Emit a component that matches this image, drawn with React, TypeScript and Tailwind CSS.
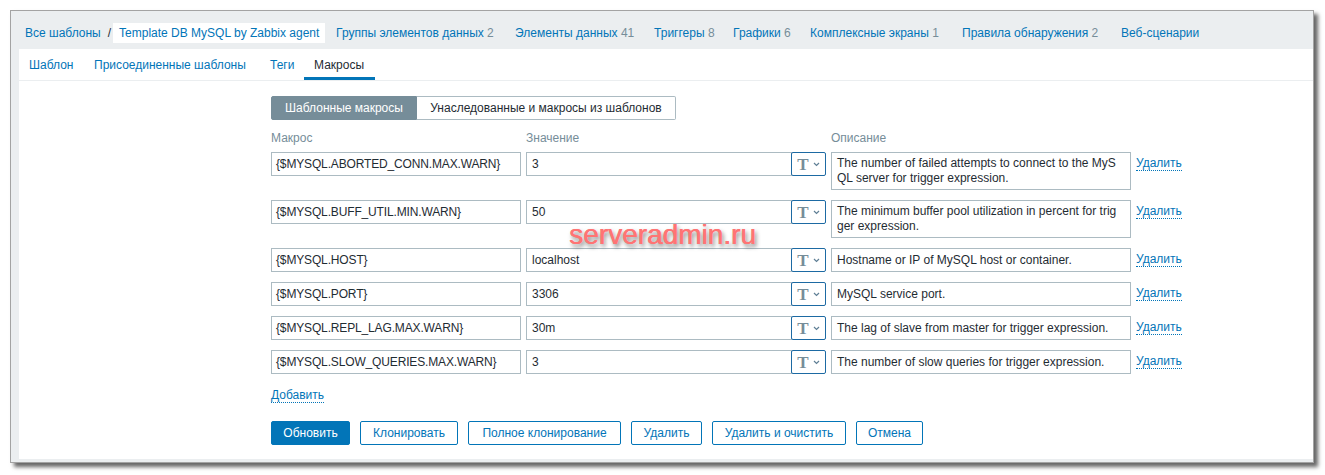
import React from "react";

const rows: { macro: string; value: string; desc: string[] }[] = [
  {
    macro: "{$MYSQL.ABORTED_CONN.MAX.WARN}",
    value: "3",
    desc: ["The number of failed attempts to connect to the MyS", "QL server for trigger expression."],
  },
  {
    macro: "{$MYSQL.BUFF_UTIL.MIN.WARN}",
    value: "50",
    desc: ["The minimum buffer pool utilization in percent for trig", "ger expression."],
  },
  { macro: "{$MYSQL.HOST}", value: "localhost", desc: ["Hostname or IP of MySQL host or container."] },
  { macro: "{$MYSQL.PORT}", value: "3306", desc: ["MySQL service port."] },
  { macro: "{$MYSQL.REPL_LAG.MAX.WARN}", value: "30m", desc: ["The lag of slave from master for trigger expression."] },
  { macro: "{$MYSQL.SLOW_QUERIES.MAX.WARN}", value: "3", desc: ["The number of slow queries for trigger expression."] },
];

const nav: { label: string; count?: string; w: string }[] = [
  { label: "Группы элементов данных", count: "2", w: "w-[179px]" },
  { label: "Элементы данных", count: "41", w: "w-[139px]" },
  { label: "Триггеры", count: "8", w: "w-[79px]" },
  { label: "Графики", count: "6", w: "w-[77px]" },
  { label: "Комплексные экраны", count: "1", w: "w-[152px]" },
  { label: "Правила обнаружения", count: "2", w: "w-[159px]" },
  { label: "Веб-сценарии", w: "w-[100px]" },
];

const tabs: { label: string; w: string }[] = [
  { label: "Шаблон", w: "w-[65px]" },
  { label: "Присоединенные шаблоны", w: "w-[176px]" },
  { label: "Теги", w: "w-[44px]" },
  { label: "Макросы", w: "w-[71px]" },
];

const buttons: { label: string; w: string; primary?: boolean }[] = [
  { label: "Обновить", w: "w-[79px]", primary: true },
  { label: "Клонировать", w: "w-[98px]" },
  { label: "Полное клонирование", w: "w-[153px]" },
  { label: "Удалить", w: "w-[71px]" },
  { label: "Удалить и очистить", w: "w-[134px]" },
  { label: "Отмена", w: "w-[67px]" },
];

export default function App() {
  return (
    <div className="relative w-[1325px] h-[475px] bg-white overflow-hidden pt-[10px] pl-[10px] font-['Liberation_Sans',Arial,sans-serif] text-[12px] text-[#1f2c33]">
      <div className="w-[1304px] h-[453px] border border-[#a3a3a3] bg-[#ebeef0] flex flex-col shadow-[4px_4px_4px_rgba(0,0,0,0.6)]">
        {/* top nav */}
        <div className="h-[38px] shrink-0 flex items-center pl-[14px] pt-[5px] leading-[14px]">
          <span className="text-[#0275b8]">Все шаблоны</span>
          <span className="ml-[7px] mr-[2px] text-[#1f2c33]">/</span>
          <span className="w-[212px] h-[20px] flex items-center px-[6px] bg-white text-[#0275b8] whitespace-nowrap">
            Template DB MySQL by Zabbix agent
          </span>
          <div className="flex items-center ml-[11px]">
            {nav.map((n) => (
              <span key={n.label} className={`${n.w} shrink-0 text-[#0275b8] whitespace-nowrap`}>
                {n.label}
                {n.count && <span className="text-[#768d99]"> {n.count}</span>}
              </span>
            ))}
          </div>
        </div>
        {/* white panel */}
        <div className="ml-[8px] mb-[3px] flex-1 bg-white flex flex-col">
          <div className="h-[32px] shrink-0 border-b border-[#ebeef0] flex">
            {tabs.map((t, i) => {
              const active = i === tabs.length - 1;
              return (
                <div
                  key={t.label}
                  className={`relative ${t.w} pl-[10px] h-full flex items-center whitespace-nowrap ${active ? "text-[#1f2c33]" : "text-[#0275b8]"}`}
                >
                  {t.label}
                  {active && <div className="absolute left-0 right-0 bottom-0 h-[3px] bg-[#0275b8]" />}
                </div>
              );
            })}
          </div>

          <div className="pl-[252px] pt-[15px] flex flex-col">
            {/* toggle */}
            <div className="flex h-[24px]">
              <div className="w-[146px] h-full flex items-center justify-center bg-[#768d99] text-white border border-[#768d99] rounded-l-[2px]">
                Шаблонные макросы
              </div>
              <div className="w-[259px] h-full flex items-center justify-center bg-white border border-l-0 border-[#acbbc2] rounded-r-[2px] text-[#1f2c33]">
                Унаследованные и макросы из шаблонов
              </div>
            </div>

            {/* labels */}
            <div className="mt-[11px] flex leading-[14px] text-[#768d99]">
              <div className="w-[255px]">Макрос</div>
              <div className="w-[305px]">Значение</div>
              <div>Описание</div>
            </div>

            {/* rows */}
            <div className="mt-[7px] flex flex-col gap-[10px]">
              {rows.map((r) => (
                <div key={r.macro} className="flex items-start">
                  <div className="w-[250px] h-[24px] border border-[#acbbc2] pl-[4px] leading-[22px] whitespace-nowrap overflow-hidden tracking-[-0.15px]">
                    {r.macro}
                  </div>
                  <div className="ml-[5px] w-[300px] h-[24px] flex">
                    <div className="flex-1 h-full border border-[#acbbc2] pl-[5px] leading-[22px]">{r.value}</div>
                    <div className="w-[35px] h-full -ml-px border border-[#1d6aa3] rounded-[2px] bg-white flex items-center justify-center gap-[4px]">
                      <span className="font-['Liberation_Serif',serif] font-bold text-[17px] leading-none text-[#768d99]">T</span>
                      <svg width="7" height="5" viewBox="0 0 7 5">
                        <polyline points="1,1 3.5,3.5 6,1" fill="none" stroke="#5f7f95" strokeWidth="1.2" />
                      </svg>
                    </div>
                  </div>
                  <div
                    className={`ml-[5px] w-[300px] border border-[#acbbc2] px-[5px] whitespace-nowrap overflow-hidden ${
                      r.desc.length > 1 ? "h-[38px] py-[3px] leading-[15px]" : "h-[24px] leading-[22px]"
                    }`}
                  >
                    {r.desc.map((d, i) => (
                      <div key={i}>{d}</div>
                    ))}
                  </div>
                  <div className="ml-[5px] pt-[4px]">
                    <span className="block leading-[14px] text-[#0275b8] border-b border-dotted border-[#0275b8]">Удалить</span>
                  </div>
                </div>
              ))}
            </div>

            <div className="mt-[14px] flex">
              <span className="leading-[14px] text-[#0275b8] border-b border-dotted border-[#0275b8]">Добавить</span>
            </div>

            <div className="mt-[18px] flex gap-[10px]">
              {buttons.map((b) => (
                <div
                  key={b.label}
                  className={`${b.w} h-[24px] flex items-center justify-center rounded-[2px] border ${
                    b.primary ? "bg-[#0275b8] border-[#0275b8] text-white" : "bg-white border-[#0275b8] text-[#0275b8]"
                  }`}
                >
                  {b.label}
                </div>
              ))}
            </div>
          </div>
        </div>
      </div>

      {/* watermark */}
      <div className="absolute left-[569px] top-[221px] text-[28px] leading-none text-[#ff7474] font-['Liberation_Sans',Arial,sans-serif] [text-shadow:0.6px_0_0_#ff7474,2px_3px_4px_rgba(50,50,50,0.65)] pointer-events-none">
        serveradmin.ru
      </div>
    </div>
  );
}
